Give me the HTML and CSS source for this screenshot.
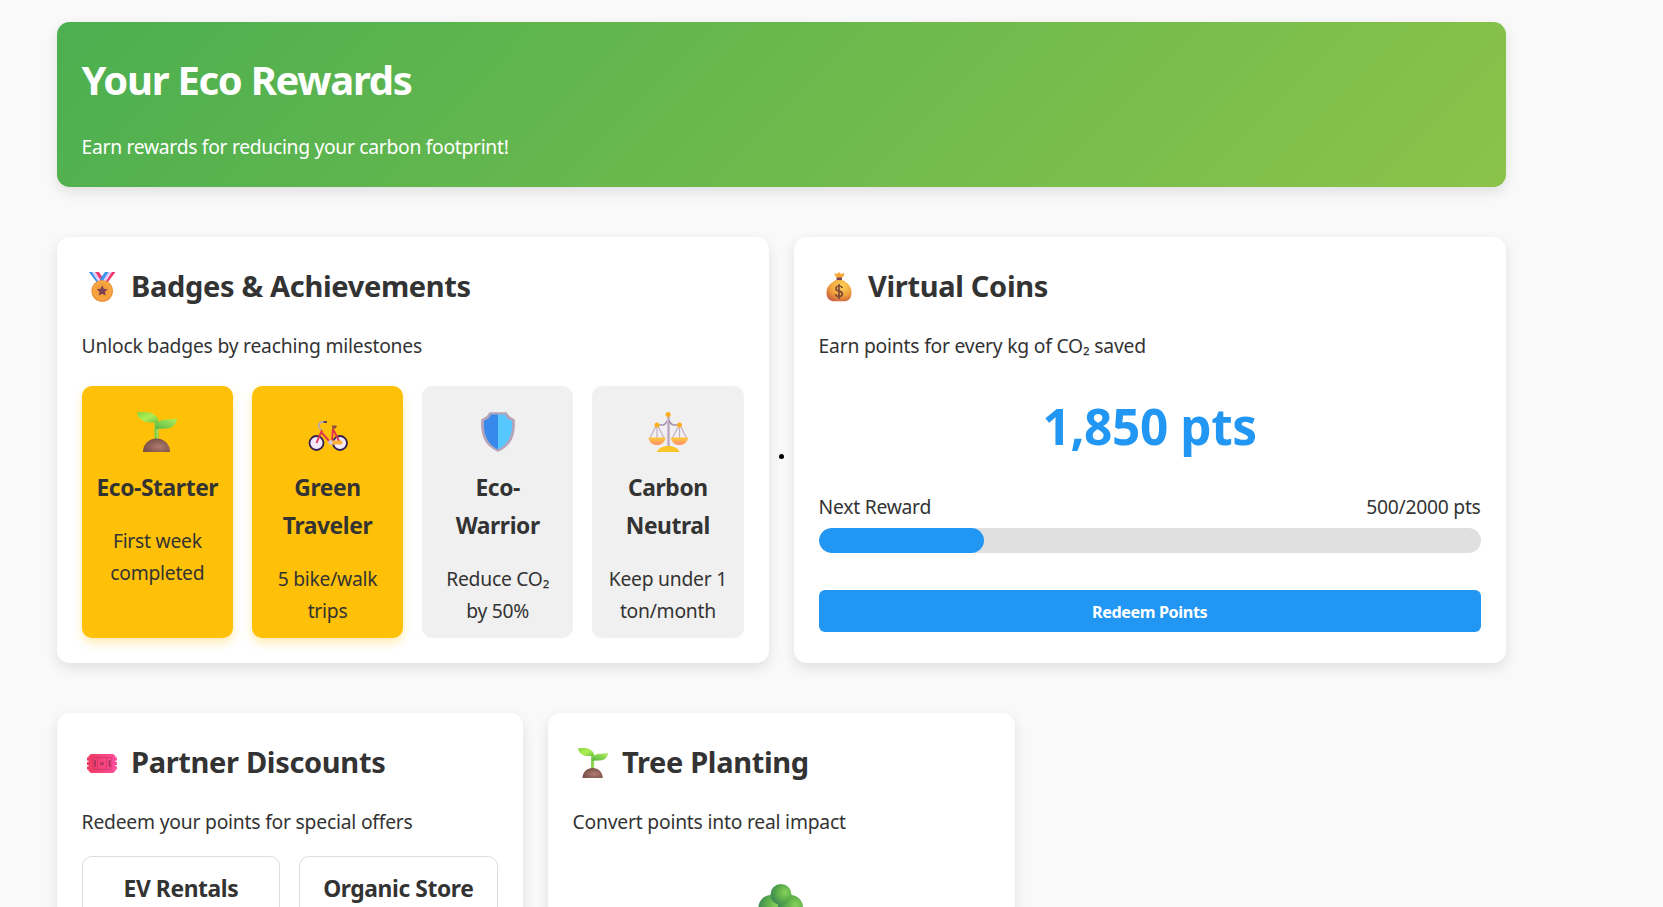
FILE: index.html
```html
<!DOCTYPE html>
<html lang="en">
<head>
<meta charset="utf-8">
<title>Your Eco Rewards</title>
<link rel="stylesheet" href="styles.css">
</head>
<body>
<svg class="defs" width="0" height="0" aria-hidden="true">
  <defs>
    <linearGradient id="leaf" x1="0" y1="0" x2="1" y2="1"><stop offset="0" stop-color="#7fd43f"/><stop offset=".5" stop-color="#b0ee55"/><stop offset="1" stop-color="#6cc644"/></linearGradient>
    <linearGradient id="leaf2" x1="0" y1="1" x2="1" y2="0"><stop offset="0" stop-color="#58b845"/><stop offset="1" stop-color="#b4f05a"/></linearGradient>
    <radialGradient id="soil" cx=".6" cy=".6" r=".7"><stop offset="0" stop-color="#b07a72"/><stop offset="1" stop-color="#70493f"/></radialGradient>
    <linearGradient id="gold" x1="0" y1="0" x2="0" y2="1"><stop offset="0" stop-color="#ffc83a"/><stop offset="1" stop-color="#ff8f6c"/></linearGradient>
    <radialGradient id="bag" cx=".6" cy=".3" r=".75"><stop offset="0" stop-color="#ffd75a"/><stop offset=".6" stop-color="#f0a03c"/><stop offset="1" stop-color="#c9603f"/></radialGradient>
    <linearGradient id="pole" x1="0" y1="0" x2="1" y2="0"><stop offset="0" stop-color="#e0cfe0"/><stop offset="1" stop-color="#a58ba8"/></linearGradient>
    <linearGradient id="ticket" x1="0" y1="0" x2="1" y2="0"><stop offset="0" stop-color="#f0385e"/><stop offset="1" stop-color="#ff4f9e"/></linearGradient>
    <radialGradient id="crown" cx=".7" cy=".4" r=".7"><stop offset="0" stop-color="#86d05b"/><stop offset=".5" stop-color="#5fb04a"/><stop offset="1" stop-color="#3d8a55"/></radialGradient>
    <symbol id="sprout" viewBox="0 0 40 40">
      <path d="M17.500 9h4v19h-4z" fill="#7cc947"/><path d="M19.500 12h1.500v16h-1.500z" fill="#a2e35a"/>
      <path d="M0 .5C7-.3 13 0 17 2.500c3.500 2.200 4.500 5 4.500 8H12C5 9.800 1 6.500 0 .5Z" fill="url(#leaf)"/>
      <path d="M18.500 17c0-6 4-9 10-9.500C33 7.300 37 7.500 40 6.500c-.5 6-5 10-10.500 10Z" fill="url(#leaf2)"/>
      <path d="M6 40c0-8 6-13.500 13.500-13.500S33 32 33 40Z" fill="url(#soil)"/>
    </symbol>
  </defs>
</svg>

<main class="page">
  <header class="hero">
    <h1 class="hero-title">Your Eco Rewards</h1>
    <p class="hero-text">Earn rewards for reducing your carbon footprint!</p>
  </header>

  <div class="row">
    <section class="card">
      <h2 class="card-title">
        <svg class="title-icon" viewBox="0 0 30 30">
          <path d="M2 0h7l7 9-5 3Z" fill="#2f8fe8"/><path d="M4.800 0h3.600l6 8-3 2Z" fill="#e4cdf2"/><path d="M8.500 0h3.500l4 6-2 3Z" fill="#f5386b"/>
          <path d="M28.500 0h-7l-7 9 5 3Z" fill="#f5386b"/><path d="M25 0h-3.500l-6 8 3 2Z" fill="#e4cdf2"/><path d="M21.500 0H18l-5 7 2.500 2.500Z" fill="#3c97ee"/>
          <circle cx="15.200" cy="19" r="10.800" fill="#ee9438"/><circle cx="15.200" cy="18.500" r="9.300" fill="#fbb047"/><circle cx="15.200" cy="18.800" r="8" fill="#f6a03d"/>
          <path d="m15.200 13.300 1.700 3.400 3.800.5-2.800 2.600.7 3.800-3.400-1.800-3.400 1.800.7-3.800-2.800-2.600 3.800-.5Z" fill="#7b4253"/>
        </svg>
        <span>Badges &amp; Achievements</span>
      </h2>
      <p class="card-text">Unlock badges by reaching milestones</p>
      <div class="badges">
        <div class="badge badge-on">
          <svg class="badge-icon"><use href="#sprout"/></svg>
          <h3 class="badge-name">Eco-Starter</h3>
          <p class="badge-text">First week completed</p>
        </div>
        <div class="badge badge-on">
          <svg class="badge-icon" viewBox="0 0 40 40">
            <circle cx="8.500" cy="31" r="7" fill="#f6e9fb" stroke="#33214f" stroke-width="1.800"/>
            <circle cx="32" cy="31" r="7" fill="#f6e9fb" stroke="#33214f" stroke-width="1.800"/>
            <path d="M8.500 31 14 18M13 20l9.500 10.500M25 16l-1 13M25.500 18l6 12" fill="none" stroke="#e0354f" stroke-width="1.900"/>
            <path d="M19 10h-3c-6-.5-7 5.500-2.500 7.500" fill="none" stroke="#b9a6b9" stroke-width="1.700"/><path d="M15.500 10h3.500" stroke="#5b4360" stroke-width="2"/>
            <path d="M23.500 13.500h5c1 2-1.500 3.500-3.500 3.300Z" fill="#8b4e45"/>
            <path d="M22 28.500h11c2 0 2 4 0 4H22Z" fill="#ffb03a"/><circle cx="22.500" cy="30.500" r="2.400" fill="#d6c6c9"/>
          </svg>
          <h3 class="badge-name">Green Traveler</h3>
          <p class="badge-text">5 bike/walk trips</p>
        </div>
        <div class="badge">
          <svg class="badge-icon" viewBox="0 0 40 40">
            <path d="M12 1h16l3 4 5 3c1 15-3 25-16 31C7 33 3 23 4 8l5-3Z" fill="#b4a3b9" stroke="#b4a3b9" stroke-width="1.500" stroke-linejoin="round"/>
            <path d="M20 2.500h-7l-2.500 4L6 9c-1 13 3 23 14 28.500Z" fill="#378aeb"/><path d="M20 2.500h7l2.500 4L34 9c1 13-3 23-14 28.500Z" fill="#56c8ff"/>
          </svg>
          <h3 class="badge-name">Eco-Warrior</h3>
          <p class="badge-text">Reduce CO₂ by 50%</p>
        </div>
        <div class="badge">
          <svg class="badge-icon" viewBox="0 0 40 40">
            <path d="M9 12 1.500 27M9 12v15M9 12l7.500 15M31.500 12 24 27M31.500 12v15M31.500 12 39 27" stroke="#c5afc6" stroke-width="1.200" fill="none"/>
            <path d="M9 13h6c3 0 3-3 5.200-5C22.500 10 22.500 13 25.500 13h6" fill="none" stroke="#a890ad" stroke-width="1.700"/>
            <path d="M18.900 3h2.600v32h-2.600z" fill="url(#pole)"/>
            <circle cx="20.200" cy="2.500" r="2.500" fill="#fdae1d"/><circle cx="9" cy="13" r="2.500" fill="#fdae1d"/><circle cx="31.500" cy="13" r="2.500" fill="#fdae1d"/>
            <path d="M.5 25.500h17c-.5 5-4 7.500-8.500 7.500S1 30.500.5 25.500ZM23 25.500h17c-.5 5-4 7.500-8.500 7.500s-8-2.500-8.500-7.500Z" fill="url(#gold)"/>
            <path d="M9 40c1-3.500 5.500-6 11.200-6S30.500 36.500 31.500 40Z" fill="#fbc52a"/>
          </svg>
          <h3 class="badge-name">Carbon Neutral</h3>
          <p class="badge-text">Keep under 1 ton/month</p>
        </div>
      </div>
    </section>

    <div class="divider"><span class="dot"></span></div>

    <section class="card">
      <h2 class="card-title">
        <svg class="title-icon" viewBox="0 0 30 30">
          <path d="m10.500 1 2.500 1 2-2 2 2 3-1c1 2-1 3.500-2 5h-5c-1-1.500-3-3-2.500-5Z" fill="#f5a93b"/><path d="M12.500 5.500h5.500v3h-5.500z" fill="#7a4453"/>
          <path d="M12 8h6.500c5 2.500 9 6.500 9 12.500C27.500 27 24 29.300 20 29.300h-9.500C6 29.300 2.500 27 2.500 20.500 2.500 14.500 7 10.500 12 8Z" fill="url(#bag)"/>
          <path d="M18.300 16c-.4-1.400-1.700-2-3.300-2-3.800 0-4.400 4.300 0 5.200 4.800 1 4.200 5.300 0 5.300-2 0-3.300-.8-3.600-2.400M15 12v15" fill="none" stroke="#824b38" stroke-width="1.700"/>
        </svg>
        <span>Virtual Coins</span>
      </h2>
      <p class="card-text">Earn points for every kg of CO₂ saved</p>
      <div class="points">1,850 pts</div>
      <div class="progress-head"><span>Next Reward</span><span>500/2000 pts</span></div>
      <div class="progress"><div class="progress-fill" style="width:25%"></div></div>
      <button class="redeem" type="button">Redeem Points</button>
    </section>
  </div>

  <div class="row row-thirds">
    <section class="card">
      <h2 class="card-title">
        <svg class="title-icon" viewBox="0 0 30 30">
          <path d="M4 6h22l2.500 2v1.500H30v3h-1.500V14H30v3h-1.500v1.500H30v3h-1.500V23L26 25H4l-2.500-2v-1.500H0v-3h1.500V17H0v-3h1.500v-1.500H0v-3h1.500V8Z" fill="url(#ticket)"/>
          <path d="M6 9.500h18v12H6zM10.500 9.500v12M19.500 9.500v12" fill="none" stroke="#cd3568" stroke-width=".8"/><path d="M8 12v7M22.500 12v7" stroke="#a93461" stroke-width="1.700"/><circle cx="15" cy="15.700" r="2" fill="#b23a61"/>
        </svg>
        <span>Partner Discounts</span>
      </h2>
      <p class="card-text">Redeem your points for special offers</p>
      <div class="offers">
        <div class="offer"><h3 class="badge-name">EV Rentals</h3></div>
        <div class="offer"><h3 class="badge-name">Organic Store</h3></div>
      </div>
    </section>
    <section class="card">
      <h2 class="card-title">
        <svg class="title-icon"><use href="#sprout"/></svg>
        <span>Tree Planting</span>
      </h2>
      <p class="card-text">Convert points into real impact</p>
      <svg class="tree" viewBox="0 0 60 80">
        <path d="M26 50h8v30h-8z" fill="#8b5a4b"/>
        <circle cx="18" cy="38" r="15" fill="url(#crown)"/><circle cx="42" cy="38" r="15" fill="url(#crown)"/>
        <path d="M20 14h20v14H20z" fill="#58a84c"/>
        <circle cx="20" cy="23.500" r="12.500" fill="url(#crown)"/><circle cx="39.500" cy="23.500" r="12.500" fill="url(#crown)"/>
        <circle cx="30" cy="10.500" r="10.500" fill="url(#crown)"/>
      </svg>
    </section>
  </div>
</main>
</body>
</html>
```

FILE: styles.css
```css
* { box-sizing: border-box; }
html, body { height: 100%; }
body {
  margin: 0;
  overflow: hidden;
  background: #f9f9f9;
  color: #333;
  font-family: "Noto Sans", "Open Sans", sans-serif;
  font-size: 19.3px;
  line-height: 32px;
  letter-spacing: -0.25px;
}
h1, h2, h3, p { margin: 0; }
.defs { display: block; height: 0; }
.page { width: 1449px; margin: 22px 0 0 56.6px; display: flex; flex-direction: column; gap: 50px; }
.hero {
  height: 165px;
  padding: 26px 25px 24px;
  border-radius: 12.5px;
  color: #fff;
  background: linear-gradient(135deg, #4caf50, #8bc34a);
  box-shadow: 0 5px 12.5px rgba(0, 0, 0, .1);
}
.hero-title { font-size: 40px; line-height: 64px; letter-spacing: -1.3px; margin-bottom: 19px; }
.hero-text { letter-spacing: -0.3px; }
.row { display: grid; grid-template-columns: 712px 25px 712px; height: 426px; }
.row-thirds { grid-template-columns: 466px 467px; column-gap: 25px; }
.card { padding: 25px; background: #fff; border-radius: 12.5px; box-shadow: 0 5px 12.5px rgba(0, 0, 0, .1); }
.card-title { display: flex; align-items: center; height: 48px; padding-left: 5.4px; font-size: 29px; line-height: 48px; letter-spacing: -0.33px; margin-bottom: 20px; white-space: nowrap; }
.title-icon { width: 30px; height: 30px; margin: 2px 14px 0 0; flex: none; }
.card-text { margin-bottom: 24px; white-space: nowrap; letter-spacing: -0.21px; }
.badges { display: grid; grid-template-columns: repeat(4, 1fr); gap: 18.75px; height: 252px; }
.badge { padding: 26px 12px 0; background: #f0f0f0; border-radius: 10px; text-align: center; }
.badge-on { background: #ffc107; box-shadow: 0 5px 10px rgba(255, 193, 7, .3); }
.badge-icon { display: block; width: 40px; height: 40px; margin: 0 auto 17px; }
.badge-name { font-size: 22.8px; line-height: 38px; letter-spacing: -0.4px; }
.badge .badge-name { margin-bottom: 18px; }
.divider { display: flex; align-items: center; justify-content: center; padding-top: 13px; }
.dot { width: 5px; height: 5px; border-radius: 50%; background: #000; }
.points { margin-top: 1px; height: 80px; text-align: center; color: #2196f3; font-size: 49.5px; font-weight: 700; line-height: 80px; letter-spacing: -0.4px; }
.progress-head { display: flex; justify-content: space-between; margin-top: 25px; }
.progress { height: 25px; margin-top: 5px; border-radius: 12.5px; background: #e0e0e0; overflow: hidden; }
.progress-fill { height: 100%; border-radius: 12.5px; background: #2196f3; }
.redeem { display: block; width: 100%; height: 42px; margin-top: 37px; padding: 2px 0 0; border: 0; border-radius: 6px; background: #2196f3; color: #fff; font: 700 16.200px "Noto Sans", sans-serif; letter-spacing: -0.4px; }
.row-thirds .card-text { margin-bottom: 18px; }
.offers { display: grid; grid-template-columns: 1fr 1fr; gap: 18.75px; }
.offer { height: 130px; padding-top: 13px; border: 1px solid #ddd; border-radius: 10px; text-align: center; white-space: nowrap; }
.tree { display: block; width: 60px; height: 80px; margin: 46px auto 0; }
```
